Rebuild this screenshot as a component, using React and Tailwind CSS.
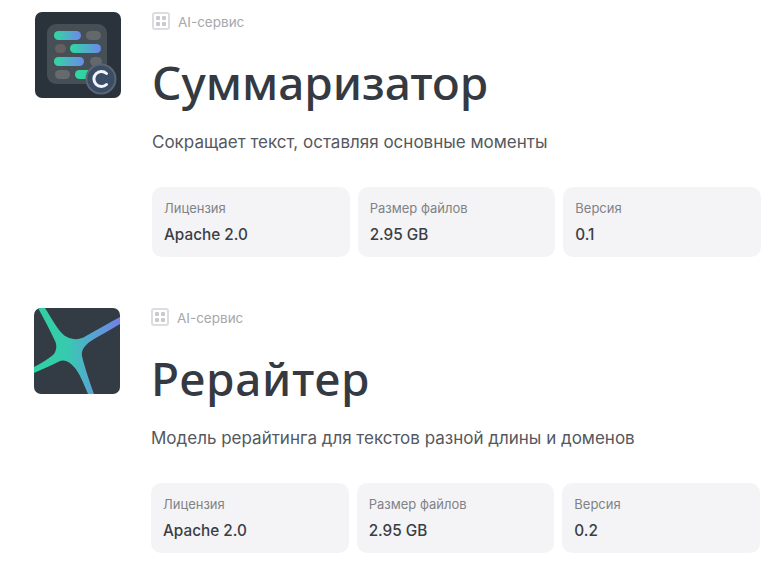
const FONT = 'font-["Inter","Noto_Sans",sans-serif]';

function GridBadge() {
  return (
    <div className="w-[18px] h-[18px] rounded-[3px] border-2 border-[#dcdde0] grid grid-cols-2 gap-[2px] p-[2px]">
      <span className="bg-[#c9cacd] rounded-[1px]"></span>
      <span className="bg-[#c9cacd] rounded-[1px]"></span>
      <span className="bg-[#c9cacd] rounded-[1px]"></span>
      <span className="bg-[#c9cacd] rounded-[1px]"></span>
    </div>
  );
}

function SummarizerLogo() {
  return (
    <svg width="86" height="86" viewBox="0 0 86 86">
      <defs>
        <linearGradient id="sumBar" x1="0" y1="0" x2="1" y2="0">
          <stop offset="0" stopColor="#2fd9a0" />
          <stop offset="1" stopColor="#6c88ea" />
        </linearGradient>
        <linearGradient id="sumBar2" x1="0" y1="0" x2="1" y2="0">
          <stop offset="0" stopColor="#2fd9a0" />
          <stop offset="1" stopColor="#35c9a5" />
        </linearGradient>
      </defs>
      <rect width="86" height="86" rx="7" fill="#2a323b" />
      <rect x="12" y="12" width="60" height="60" rx="9" fill="#474f56" />
      <rect x="19" y="19" width="27" height="9" rx="4.5" fill="url(#sumBar)" />
      <rect x="51" y="19" width="15" height="9" rx="4.5" fill="#63686b" />
      <rect x="20" y="32" width="11" height="9" rx="4.5" fill="#665f60" />
      <rect x="35" y="32" width="31" height="9" rx="4.5" fill="url(#sumBar)" />
      <rect x="19" y="45" width="30" height="9" rx="4.5" fill="url(#sumBar)" />
      <rect x="55" y="45" width="12" height="9" rx="4.5" fill="#63686b" />
      <rect x="20" y="58" width="15" height="9" rx="4.5" fill="#666a6e" />
      <rect x="40" y="58" width="20" height="9" rx="4.5" fill="url(#sumBar2)" />
      <circle cx="66" cy="67" r="14.5" fill="#3a4c66" stroke="#5c6670" strokeWidth="2" />
      <path d="M71.5 61.5a7.5 7.5 0 1 0 0 11" fill="none" stroke="#f1f4fa" strokeWidth="3" strokeLinecap="round" />
    </svg>
  );
}

function RewriterLogo() {
  return (
    <svg width="86" height="86" viewBox="0 0 86 86">
      <defs>
        <clipPath id="rwClip">
          <rect width="86" height="86" rx="7" />
        </clipPath>
        <linearGradient id="rwStar" gradientUnits="userSpaceOnUse" x1="0" y1="0" x2="86" y2="0">
          <stop offset="0" stopColor="#2fd3a0" />
          <stop offset="0.4" stopColor="#38c9b0" />
          <stop offset="0.66" stopColor="#55a8d0" />
          <stop offset="1" stopColor="#7280e8" />
        </linearGradient>
      </defs>
      <g clipPath="url(#rwClip)">
        <rect width="86" height="86" fill="#333c45" />
        <path
          d="M4 0 L11 0 C19 13 26 26 33 29 C39 32 46 32 52 28 C64 21 75 15 86 9 L86 16 C76 22 65 28 57 33 C51 37 47 42 48 48 C50 57 55 72 60 86 L54 86 C49 74 45 64 40 59 C35 53 30 51 24 54 C17 58 8 61 0 65 L0 59 C8 55 14 51 19 47 C23 43 23 37 21 33 C16 22 10 11 4 0 Z"
          fill="url(#rwStar)"
        />
      </g>
    </svg>
  );
}

function StatCard({ label, value }) {
  return (
    <div className="bg-[#f4f4f6] rounded-[10px] px-3 pt-[13px] h-[70px]">
      <div className="text-[13px] leading-4 text-[#808286]">{label}</div>
      <div className="text-[15.3px] leading-5 font-medium text-[#3a3e45] mt-[9px]">{value}</div>
    </div>
  );
}

function ModelRow({ logo, title, titleClass, description, version, className }) {
  return (
    <section className={`flex gap-[31px] ${className}`}>
      <div className="w-[86px] shrink-0">{logo}</div>
      <div className="w-[609px]">
        <div className="flex items-center gap-2 h-[18px]">
          <GridBadge />
          <span className="text-[13.5px] text-[#a6a8ab] translate-y-px">AI-сервис</span>
        </div>
        <h1 className={`font-["Noto_Sans",sans-serif] text-[46px] leading-[56px] font-medium text-[#353a42] mt-[24px] ${titleClass}`}>{title}</h1>
        <p className="text-[17px] leading-6 text-[#55585e] mt-[20px]">{description}</p>
        <div className="grid grid-cols-3 gap-2 mt-[33px]">
          <StatCard label="Лицензия" value="Apache 2.0" />
          <StatCard label="Размер файлов" value="2.95 GB" />
          <StatCard label="Версия" value={version} />
        </div>
      </div>
    </section>
  );
}

export default function App() {
  return (
    <div className={`w-[780px] h-[572px] overflow-hidden bg-white pt-3 pl-[35px] ${FONT}`}>
      <ModelRow
        logo={<SummarizerLogo />}
        title="Суммаризатор"
        description="Сокращает текст, оставляя основные моменты"
        version="0.1"
      />
      <ModelRow
        className="mt-[51px] -ml-px"
        titleClass="tracking-[0.8px]"
        logo={<RewriterLogo />}
        title="Рерайтер"
        description="Модель рерайтинга для текстов разной длины и доменов"
        version="0.2"
      />
    </div>
  );
}
